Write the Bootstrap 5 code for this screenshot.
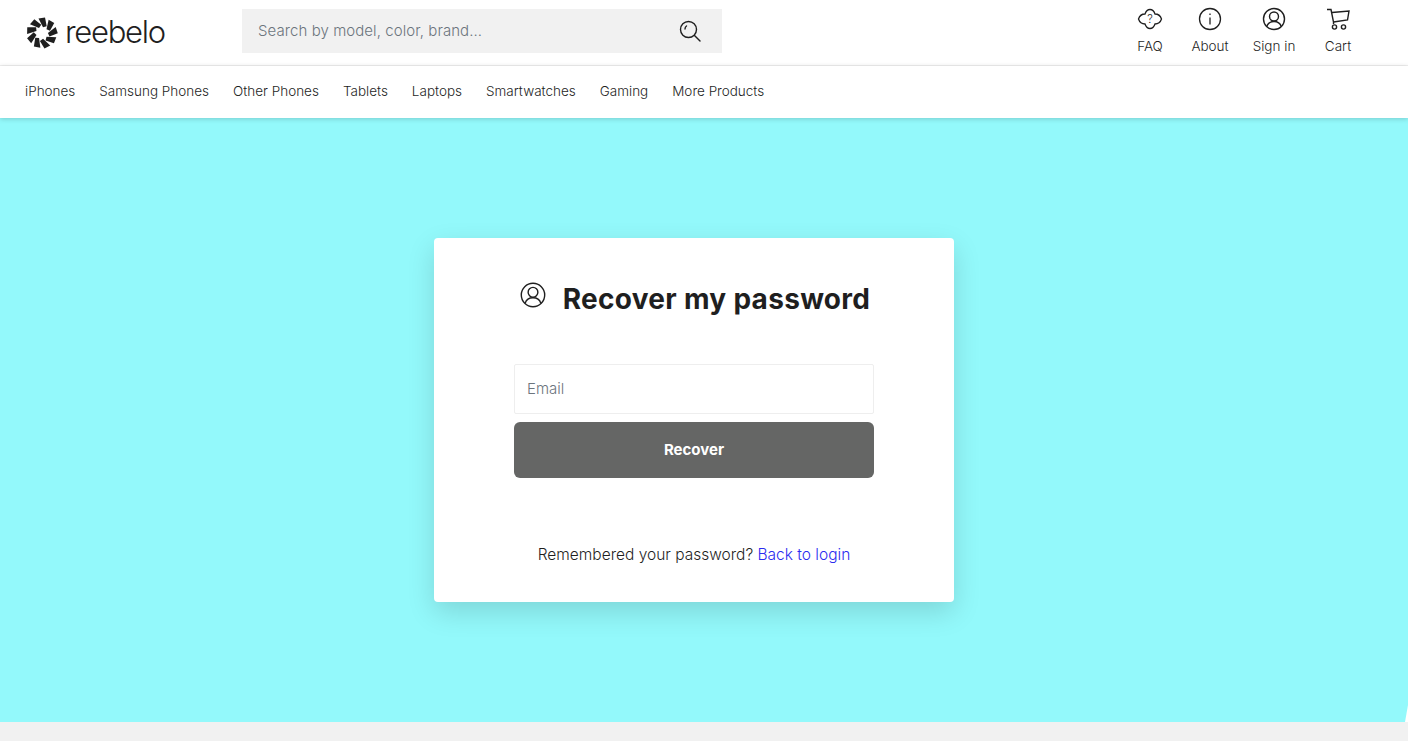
<!DOCTYPE html>
<html lang="en">
  <head>
    <meta charset="UTF-8" />
    <meta name="viewport" content="width=device-width, initial-scale=1.0" />
    <title>Recover my password - Reebelo</title>
    <link href="https://cdn.jsdelivr.net/npm/bootstrap@5.3.0/dist/css/bootstrap.min.css" rel="stylesheet" />
    <style>
      body {
        font-family: Inter, "Liberation Sans", sans-serif;
        color: #1f1f1f;
        background: #f1f1f1;
        height: 741px;
        overflow: hidden;
      }
      .site-top {
        height: 66px;
        background: #fff;
        border-bottom: 1px solid #f0f0f0;
        padding: 0 38px 0 26px;
      }
      .brand-link {
        width: 216px;
        color: #1f1f1f;
        text-decoration: none;
        font-size: 31px;
        font-weight: 300;
        letter-spacing: -1.3px;
        gap: 7px;
      }
      .search-box {
        width: 480px;
        height: 44px;
        margin-top: -4px;
        background: #f1f1f1;
        padding: 0 20px 0 14px;
      }
      .search-box input {
        border: 0;
        background: transparent;
        outline: 0;
        flex: 1;
        font-size: 15px;
        font-weight: 300;
        letter-spacing: .07px;
        padding-top: 2px;
        color: #1f1f1f;
      }
      .search-box input::placeholder { color: #6c757d; }
      .top-links { margin-top: -4px; }
      .top-link {
        color: #1f1f1f;
        text-decoration: none;
        font-size: 13.5px;
        font-weight: 300;
        line-height: 16px;
        width: 64px;
        gap: 7px;
      }
      .top-link.narrow-link { width: 56px; }
      .cat-bar {
        height: 52px;
        background: #fff;
        padding: 0 25px 2px;
        gap: 24px;
        position: relative;
        z-index: 1;
        box-shadow: 0 1px 5px rgba(0, 0, 0, .18);
      }
      .cat-bar a {
        color: #1f1f1f;
        text-decoration: none;
        font-size: 13.5px;
        font-weight: 300;
      }
      .hero-wrap {
        height: 604px;
        background: #fff;
      }
      .hero-area {
        height: 100%;
        background: #93f9fb;
        clip-path: polygon(0 0, 100% 0, 100% 587px, 1405px 100%, 0 100%);
        padding: 120px 20px 0 0;
      }
      .recover-box {
        width: 520px;
        height: 364px;
        background: #fff;
        border-radius: 4px;
        padding: 44px 80px 0;
        box-shadow: 0 10px 28px rgba(0, 0, 0, .14);
      }
      .recover-title {
        font-size: 28px;
        font-weight: 700;
        letter-spacing: .3px;
        line-height: 34px;
        margin: 0 0 48px;
        padding-left: 2px;
        gap: 17px;
      }
      .recover-title svg { margin-top: -8px; }
      .email-input {
        height: 50px;
        border: 1px solid #eee;
        border-radius: 2px;
        font-size: 15px;
        font-weight: 300;
        padding: 0 12px 2px;
        margin-bottom: 8px;
      }
      .email-input::placeholder { color: #6c757d; }
      .recover-btn {
        height: 56px;
        background: #656665;
        border: 0;
        border-radius: 6px;
        color: #fff;
        font-size: 15px;
        font-weight: 700;
      }
      .recover-btn:hover { background: #565756; color: #fff; }
      .back-line {
        font-size: 15.5px;
        font-weight: 300;
        margin-top: 65px;
      }
      .back-line a { color: #2b2bef; text-decoration: none; }
    </style>
  </head>
  <body>
    <header class="site-top d-flex align-items-center">
      <a class="brand-link d-flex align-items-center" href="#">
        <svg width="32" height="32" viewBox="-16 -16 32 32" fill="#1f1f1f" aria-hidden="true">
          <path d="M1 -5.8 L-3.5 -14.5 L3 -15.5 L4.7 -6.8 Z" />
          <path d="M1 -5.8 L-3.5 -14.5 L3 -15.5 L4.7 -6.8 Z" transform="rotate(40)" />
          <path d="M1 -5.8 L-3.5 -14.5 L3 -15.5 L4.7 -6.8 Z" transform="rotate(80)" />
          <path d="M1 -5.8 L-3.5 -14.5 L3 -15.5 L4.7 -6.8 Z" transform="rotate(120)" />
          <path d="M1 -5.8 L-3.5 -14.5 L3 -15.5 L4.7 -6.8 Z" transform="rotate(160)" />
          <path d="M1 -5.8 L-3.5 -14.5 L3 -15.5 L4.7 -6.8 Z" transform="rotate(200)" />
          <path d="M1 -5.8 L-3.5 -14.5 L3 -15.5 L4.7 -6.8 Z" transform="rotate(240)" />
          <path d="M1 -5.8 L-3.5 -14.5 L3 -15.5 L4.7 -6.8 Z" transform="rotate(280)" />
          <path d="M1 -5.8 L-3.5 -14.5 L3 -15.5 L4.7 -6.8 Z" transform="rotate(320)" />
        </svg>
        <span>reebelo</span>
      </a>
      <form class="search-box d-flex align-items-center">
        <input type="text" placeholder="Search by model, color, brand..." />
        <svg width="24" height="24" viewBox="0 0 24 24" fill="none" stroke="#1f1f1f" stroke-width="1.4" stroke-linecap="round" aria-hidden="true">
          <circle cx="10.5" cy="10.5" r="8" />
          <path d="M16.5 16.5 L22 22" />
          <path d="M7 10 Q7 8 8.5 7" />
        </svg>
      </form>
      <nav class="top-links d-flex ms-auto">
        <a class="top-link narrow-link d-flex flex-column align-items-center" href="#">
          <svg width="26" height="24" viewBox="0 0 26 24" fill="none" stroke="#1f1f1f" stroke-width="1.3" aria-hidden="true">
            <path d="M1.5 12 C2.5 9 5 7 8 7 C9 4 11 2.5 13 2.5 C15 2.5 17 4 18 7 C21 7 23.5 9 24.5 12 C23.5 15 21 17 18 17 C17 20 15 21.5 13 21.5 C11 21.5 9 20 8 17 C5 17 2.5 15 1.5 12 Z" />
            <text x="13" y="16" text-anchor="middle" font-size="11" font-family="Inter, sans-serif" fill="#1f1f1f" stroke="none">?</text>
          </svg>
          FAQ
        </a>
        <a class="top-link d-flex flex-column align-items-center" href="#">
          <svg width="24" height="24" viewBox="0 0 24 24" fill="none" stroke="#1f1f1f" stroke-width="1.3" aria-hidden="true">
            <circle cx="12" cy="12" r="10.5" />
            <path d="M12 10.5 V17.5" />
            <path d="M12 6.5 V8" />
          </svg>
          About
        </a>
        <a class="top-link d-flex flex-column align-items-center" href="#">
          <svg width="24" height="24" viewBox="0 0 24 24" fill="none" stroke="#1f1f1f" stroke-width="1.4" aria-hidden="true">
            <circle cx="12" cy="12" r="10.5" />
            <circle cx="12" cy="9.5" r="4.5" />
            <path d="M4.8 19.5 C6 15.5 9 14.5 12 14.5 C15 14.5 18 15.5 19.2 19.5" />
          </svg>
          Sign in
        </a>
        <a class="top-link d-flex flex-column align-items-center" href="#">
          <svg width="24" height="24" viewBox="0 0 24 24" fill="none" stroke="#1f1f1f" stroke-width="1.4" aria-hidden="true">
            <path d="M1 2.5 H5 L7.5 15 V17" />
            <path d="M6 5.5 L23 4 L21.5 13 L7.5 15" />
            <circle cx="8.5" cy="20" r="2.1" />
            <circle cx="17.5" cy="20" r="2.1" />
          </svg>
          Cart
        </a>
      </nav>
    </header>

    <nav class="cat-bar d-flex align-items-center">
      <a href="#">iPhones</a>
      <a href="#">Samsung Phones</a>
      <a href="#">Other Phones</a>
      <a href="#">Tablets</a>
      <a href="#">Laptops</a>
      <a href="#">Smartwatches</a>
      <a href="#">Gaming</a>
      <a href="#">More Products</a>
    </nav>

    <div class="hero-wrap">
      <main class="hero-area d-flex justify-content-center align-items-start">
        <div class="recover-box">
          <h1 class="recover-title d-flex align-items-center justify-content-center">
            <svg width="26" height="26" viewBox="0 0 24 24" fill="none" stroke="#1f1f1f" stroke-width="1.3" aria-hidden="true">
              <circle cx="12" cy="12" r="10.8" />
              <circle cx="12" cy="9.5" r="4.5" />
              <path d="M4.8 19.5 C6 15.5 9 14.5 12 14.5 C15 14.5 18 15.5 19.2 19.5" />
            </svg>
            Recover my password
          </h1>
          <form>
            <input type="email" class="form-control email-input" placeholder="Email" />
            <button type="button" class="btn recover-btn w-100">Recover</button>
          </form>
          <p class="back-line text-center">Remembered your password? <a href="#">Back to login</a></p>
        </div>
      </main>
    </div>
  </body>
</html>
